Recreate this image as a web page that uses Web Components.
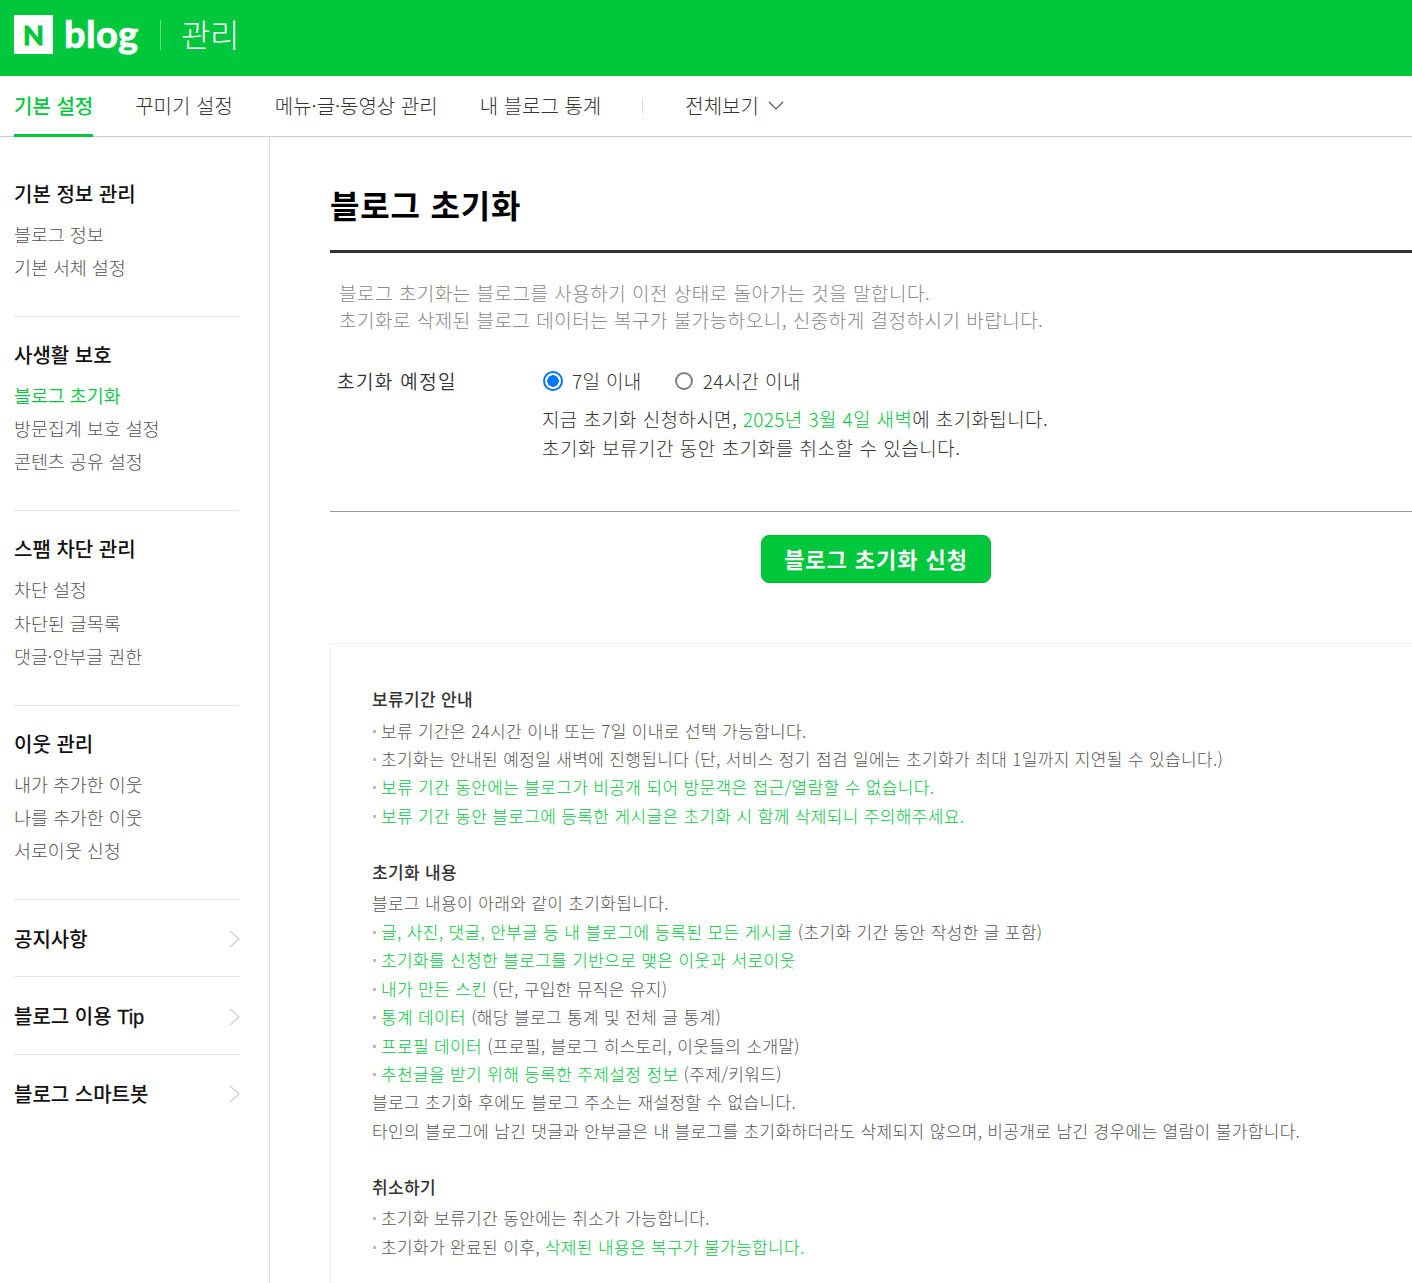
<!DOCTYPE html>
<html lang="ko"><head><meta charset="utf-8"><title>블로그 초기화</title>
<style>
html,body{margin:0;padding:0;background:#fff;overflow:hidden;height:1283px}
body{font-family:"Noto Sans CJK KR","Noto Sans",sans-serif;color:#333}
</style></head><body>
<blog-header></blog-header>
<blog-tabs></blog-tabs>
<blog-layout>
  <blog-sidebar slot="side"></blog-sidebar>
  <reset-page slot="main"></reset-page>
</blog-layout>
<script>
const def=(name,html)=>customElements.define(name,class extends HTMLElement{
  constructor(){super();this.attachShadow({mode:'open'}).innerHTML=html}
});
def('blog-header',`<style>
:host{display:flex;align-items:center;height:76px;background:#00c73c;padding:0 0 7px 14px;box-sizing:border-box;color:#fff}
.n{width:39px;height:39px;background:#fff;display:flex;align-items:center;justify-content:center;color:#00c73c;font:900 27px/39px Lato,sans-serif;-webkit-text-stroke:.8px #00c73c}
.b{margin-left:11px;font:900 38px/39px Lato,sans-serif;letter-spacing:.3px;width:74px;position:relative;top:-1px;-webkit-text-stroke:.4px #fff}
.s{width:1px;height:30px;background:rgba(255,255,255,.4);margin:0 21px 0 22px}
.t{font-size:32px;font-weight:300;line-height:39px;letter-spacing:-.4px;position:relative;top:-1px;margin-left:-1px}
</style><span class="n">N</span><span class="b">blog</span><span class="s"></span><span class="t">관리</span>`);
def('blog-tabs',`<style>
:host{display:flex;height:61px;box-sizing:border-box;border-bottom:1px solid #ccc;padding-left:14px;align-items:stretch;font-size:20px;color:#333}
a{display:flex;align-items:center;margin-right:42px;height:61px;box-sizing:border-box;padding-bottom:3px;font-weight:300}
a.on{color:#00c73c;font-weight:500;border-bottom:3px solid #00c73c;padding-top:0;padding-bottom:0}
i{width:1px;height:16px;background:#ddd;align-self:center;margin:0 42px 0 -1px}
svg{margin-left:9px;margin-top:1px}
</style><a class="on">기본 설정</a><a>꾸미기 설정</a><a>메뉴·글·동영상 관리</a><a>내 블로그 통계</a><i></i><a>전체보기<svg width="16" height="9" viewBox="0 0 16 9"><path d="M1 1l7 7 7-7" fill="none" stroke="#555" stroke-width="1.2"/></svg></a>`);
def('blog-layout',`<style>
:host{display:flex;align-items:stretch;min-height:1146px}
.s{width:270px;flex:none;box-sizing:border-box;border-right:1px solid #ddd}
.m{width:1092px;flex:none;margin-left:60px}
</style><div class="s"><slot name="side"></slot></div><div class="m"><slot name="main"></slot></div>`);
customElements.define('side-group',class extends HTMLElement{
  constructor(){super();this.attachShadow({mode:'open'}).innerHTML=`<style>
:host{display:block;margin:0 30px 0 14px;padding:23px 0 0;border-bottom:1px solid #e5e5e5;height:194.4px;box-sizing:border-box}
h3{margin:0 0 9px;font-size:20px;line-height:30px;font-weight:500;color:#111}
::slotted(a){display:block;font-size:18.5px;line-height:33.2px;color:#555;font-weight:300;letter-spacing:-.1px}
::slotted(a.on){color:#00c73c;font-weight:350}
</style><h3></h3><slot></slot>`;
  }
  connectedCallback(){this.shadowRoot.querySelector('h3').textContent=this.getAttribute('title')}
});
customElements.define('side-link',class extends HTMLElement{
  constructor(){super();this.attachShadow({mode:'open'}).innerHTML=`<style>
:host{display:flex;align-items:center;justify-content:space-between;margin:0 29px 0 14px;height:77.3px;box-sizing:border-box;border-bottom:1px solid #e5e5e5;font-size:20px;font-weight:500;color:#111}
:host(:last-child){border-bottom:0}
svg{margin-top:2px}
::slotted(b){font-family:"Liberation Sans",sans-serif;font-weight:400;-webkit-text-stroke:.3px #111}
</style><span><slot></slot></span><svg width="11" height="18" viewBox="0 0 11 18"><path d="M1 1l9 8-9 8" fill="none" stroke="#ccc" stroke-width="1.1"/></svg>`;
  }
});
def('blog-sidebar',`<style>:host{display:block}</style>
<side-group title="기본 정보 관리" style="height:180px;padding-top:41.5px"><a>블로그 정보</a><a>기본 서체 설정</a></side-group>
<side-group title="사생활 보호"><a class="on">블로그 초기화</a><a>방문집계 보호 설정</a><a>콘텐츠 공유 설정</a></side-group>
<side-group title="스팸 차단 관리"><a>차단 설정</a><a>차단된 글목록</a><a>댓글·안부글 권한</a></side-group>
<side-group title="이웃 관리"><a>내가 추가한 이웃</a><a>나를 추가한 이웃</a><a>서로이웃 신청</a></side-group>
<side-link>공지사항</side-link><side-link>블로그 이용 <b>Tip</b></side-link><side-link>블로그 스마트봇</side-link>`);
def('reset-option',`<style>
:host{display:flex;align-items:center;font-size:19px;font-weight:300;color:#333;letter-spacing:.35px;margin-right:31px;line-height:30px}
.r{width:18px;height:18px;border:2px solid #808080;border-radius:50%;box-sizing:border-box;margin:0 10px 0 2px;background:#fff}
:host([checked]) .r{border-color:#0075ff;background:radial-gradient(circle,#0075ff 0 5.5px,#fff 6px);width:20px;height:20px;margin:0 9px 0 1px}
</style><span class="r"></span><slot></slot>`);
def('note-list',`<style>
:host{display:block;margin-bottom:27.5px;font-size:17px;line-height:28.45px;color:#555;font-weight:300;letter-spacing:.35px}
h4{margin:0 0 3px;font-size:17px;line-height:28.5px;font-weight:500;color:#333}
</style><h4></h4><slot></slot>`);
customElements.define('note-item',class extends HTMLElement{
  constructor(){super();this.attachShadow({mode:'open'}).innerHTML=`<style>
:host{display:block;white-space:nowrap}
:host([bullet]){padding-left:9px;position:relative}
:host([bullet])::before{content:"";position:absolute;left:1px;top:13px;width:3px;height:3px;background:#bbb}
::slotted(em){font-style:normal;color:#00c73c}
</style><slot></slot>`;
  }
});
def('reset-page',`<style>
:host{display:block}
h1{margin:0;height:116px;box-sizing:border-box;border-bottom:3px solid #333;font-size:32px;line-height:48px;padding-top:43px;font-weight:700;color:#000;letter-spacing:.8px}
.desc{margin:0;padding:26px 0 0 9px;font-size:19px;line-height:27px;color:#888;font-weight:300;height:104px;box-sizing:border-box;letter-spacing:.5px}
.row{display:flex;height:155px;border-bottom:1px solid #999;box-sizing:border-box}
.k{width:212px;padding-left:7px;box-sizing:border-box;font-size:19px;line-height:30px;font-weight:350;color:#333;padding-top:9px;letter-spacing:1.4px}
.opts{display:flex;padding-top:9px}
.msg{margin:8px 0 0;font-size:19px;line-height:29px;font-weight:300;color:#333;letter-spacing:.37px}
.msg span{letter-spacing:.53px}
em{font-style:normal;color:#00c73c}
.btn{display:flex;width:230px;height:48px;margin:23px auto 60px;align-items:center;justify-content:center;background:#00c73c;border:1px solid #00b836;box-sizing:border-box;border-radius:8px;color:#fff;font-size:22px;font-weight:700;letter-spacing:.95px;padding-bottom:3px}
.box{border:1px solid #eee;border-right:0;padding:41px 0 0 41px;height:800px;box-sizing:border-box}
</style>
<h1>블로그 초기화</h1>
<p class="desc">블로그 초기화는 블로그를 사용하기 이전 상태로 돌아가는 것을 말합니다.<br>초기화로 삭제된 블로그 데이터는 복구가 불가능하오니, 신중하게 결정하시기 바랍니다.</p>
<div class="row"><div class="k">초기화 예정일</div><div><div class="opts"><reset-option checked>7일 이내</reset-option><reset-option>24시간 이내</reset-option></div>
<p class="msg">지금 초기화 신청하시면, <em>2025년 3월 4일 새벽</em>에 초기화됩니다.<br><span>초기화 보류기간 동안 초기화를 취소할 수 있습니다.</span></p></div></div>
<a class="btn">블로그 초기화 신청</a>
<div class="box">
<note-list id="a"><note-item bullet>보류 기간은 24시간 이내 또는 7일 이내로 선택 가능합니다.</note-item><note-item bullet>초기화는 안내된 예정일 새벽에 진행됩니다 (단, 서비스 정기 점검 일에는 초기화가 최대 1일까지 지연될 수 있습니다.)</note-item><note-item bullet><em>보류 기간 동안에는 블로그가 비공개 되어 방문객은 접근/열람할 수 없습니다.</em></note-item><note-item bullet><em>보류 기간 동안 블로그에 등록한 게시글은 초기화 시 함께 삭제되니 주의해주세요.</em></note-item></note-list>
<note-list id="b"><note-item>블로그 내용이 아래와 같이 초기화됩니다.</note-item><note-item bullet><em>글, 사진, 댓글, 안부글 등 내 블로그에 등록된 모든 게시글</em> (초기화 기간 동안 작성한 글 포함)</note-item><note-item bullet><em>초기화를 신청한 블로그를 기반으로 맺은 이웃과 서로이웃</em></note-item><note-item bullet><em>내가 만든 스킨</em> (단, 구입한 뮤직은 유지)</note-item><note-item bullet><em>통계 데이터</em> (해당 블로그 통계 및 전체 글 통계)</note-item><note-item bullet><em>프로필 데이터</em> (프로필, 블로그 히스토리, 이웃들의 소개말)</note-item><note-item bullet><em>추천글을 받기 위해 등록한 주제설정 정보</em> (주제/키워드)</note-item><note-item>블로그 초기화 후에도 블로그 주소는 재설정할 수 없습니다.</note-item><note-item>타인의 블로그에 남긴 댓글과 안부글은 내 블로그를 초기화하더라도 삭제되지 않으며, 비공개로 남긴 경우에는 열람이 불가합니다.</note-item></note-list>
<note-list id="c"><note-item bullet>초기화 보류기간 동안에는 취소가 가능합니다.</note-item><note-item bullet>초기화가 완료된 이후, <em>삭제된 내용은 복구가 불가능합니다.</em></note-item></note-list>
</div>`);
</script>
<script>
const rp=document.querySelector('reset-page').shadowRoot;
[['a','보류기간 안내'],['b','초기화 내용'],['c','취소하기']].forEach(([id,t])=>{rp.getElementById(id).shadowRoot.querySelector('h4').textContent=t});
</script>
</body></html>
